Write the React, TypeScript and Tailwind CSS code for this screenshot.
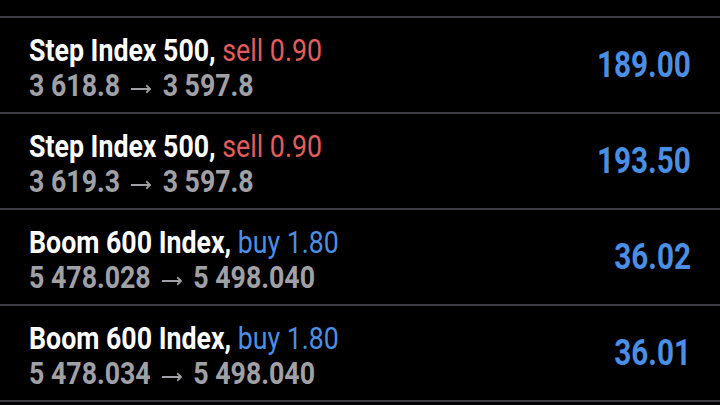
import React from "react";

type Trade = {
  symbol: string;
  side: "sell" | "buy";
  volume: string;
  open: string;
  close: string;
  profit: string;
};

const trades: Trade[] = [
  { symbol: "Step Index 500,", side: "sell", volume: "0.90", open: "3 618.8", close: "3 597.8", profit: "189.00" },
  { symbol: "Step Index 500,", side: "sell", volume: "0.90", open: "3 619.3", close: "3 597.8", profit: "193.50" },
  { symbol: "Boom 600 Index,", side: "buy", volume: "1.80", open: "5 478.028", close: "5 498.040", profit: "36.02" },
  { symbol: "Boom 600 Index,", side: "buy", volume: "1.80", open: "5 478.034", close: "5 498.040", profit: "36.01" },
];

function Arrow() {
  return (
    <svg
      className="mx-[13px] inline-block h-[10px] w-[25px] align-[2px]"
      viewBox="0 0 25 10"
      fill="none"
      stroke="currentColor"
      strokeWidth={2}
    >
      <path d="M0 5h23M18.5 1.2l4.5 3.8-4.5 3.8" />
    </svg>
  );
}

function TradeRow({ trade }: { trade: Trade }) {
  return (
    <div className="flex h-[94px] items-center justify-between pl-[29px] pr-[29px]">
      <div className="origin-left scale-x-[0.835] whitespace-nowrap pt-[6px] text-[32px] leading-[35px]">
        <div>
          <span className="font-bold text-white">{trade.symbol}</span>{" "}
          <span className={trade.side === "sell" ? "text-[#e35d5d]" : "text-[#4a8fe3]"}>
            {trade.side} {trade.volume}
          </span>
        </div>
        <div className="font-bold text-[#a0a1a6]">
          {trade.open}
          <Arrow />
          {trade.close}
        </div>
      </div>
      <div className="origin-right scale-x-[0.825] whitespace-nowrap text-[36px] font-bold leading-none text-[#4a8fe3]">
        {trade.profit}
      </div>
    </div>
  );
}

export default function App() {
  return (
    <div className="h-[405px] w-[720px] overflow-hidden bg-black font-['Roboto',sans-serif]">
      <div className="h-4" />
      {trades.map((t, i) => (
        <React.Fragment key={i}>
          <div className="h-[2px] bg-[#3d3d43]" />
          <TradeRow trade={t} />
        </React.Fragment>
      ))}
      <div className="h-[2px] bg-[#3d3d43]" />
    </div>
  );
}
